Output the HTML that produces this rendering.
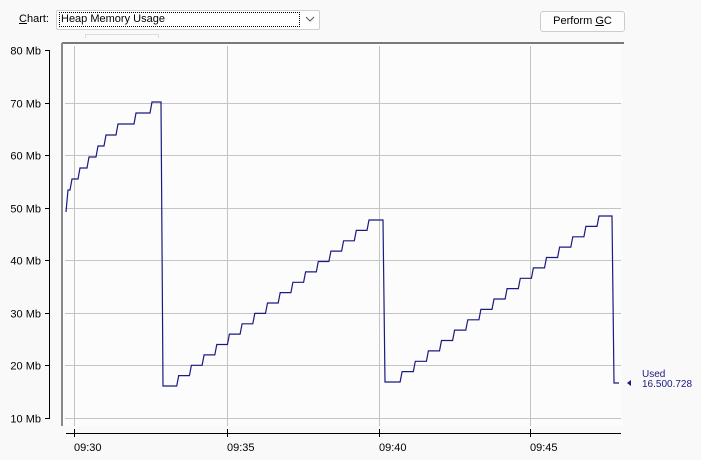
<!DOCTYPE html>
<html><head><meta charset="utf-8"><style>
body{margin:0;width:701px;height:460px;background:#f9f9f9;font-family:"Liberation Sans",sans-serif;font-size:11px;color:#000;position:relative;overflow:hidden}
.a{position:absolute}
</style></head><body>
<div class="a" style="left:19px;top:13px;font-size:11px"><u>C</u>hart:</div>
<div class="a" style="left:56px;top:10px;width:262px;height:18px;border:1px solid #cfcfcf;background:#fff;border-radius:2px"></div>
<div class="a" style="left:59px;top:12px;width:238px;height:13px;border:1px dotted #000;font-size:11px;line-height:13px;padding-left:1px">Heap Memory Usage</div>
<svg class="a" style="left:305px;top:16px" width="10" height="6"><path d="M1 1 L5 5 L9 1" fill="none" stroke="#555"/></svg>
<div class="a" style="left:85px;top:34px;width:72px;height:3px;border:1px solid #ddd;border-bottom:none"></div>
<div class="a" style="left:540px;top:11px;width:83px;height:19px;border:1px solid #ccc;border-radius:3px;background:#fdfdfd;text-align:center;line-height:19px;font-size:11px">Perform <u>G</u>C</div>
<svg class="a" style="left:0;top:0" width="701" height="460" id="s">
<rect x="62" y="43" width="560" height="383" fill="#fcfcfc"/>
<g stroke="#c4c4c4" stroke-width="1" id="grid"></g>
<line x1="62" y1="43" x2="624" y2="43" stroke="#7a7a7a" stroke-width="2"/>
<line x1="62" y1="43" x2="62" y2="426" stroke="#8a8a8a" stroke-width="2"/>
<line x1="49.5" y1="50" x2="49.5" y2="418" stroke="#000"/>
<line x1="66" y1="433.5" x2="621" y2="433.5" stroke="#000"/>
<g id="ax" font-family="Liberation Sans, sans-serif" font-size="11"></g>
<path id="d" fill="none" stroke="#1a1a80" stroke-width="1.2"/>
<path d="M631 380 L627 383 L631 386 Z" fill="#1a1a80"/>
<text x="642" y="377" font-size="10" fill="#1a1a80" font-family="Liberation Sans, sans-serif">Used</text>
<text x="642" y="387" font-size="10" fill="#1a1a80" font-family="Liberation Sans, sans-serif">16.500.728</text>
</svg>
<script>
var ns="http://www.w3.org/2000/svg",g=document.getElementById('grid'),ax=document.getElementById('ax');
function el(p,t,a,txt){var e=document.createElementNS(ns,t);for(var k in a)e.setAttribute(k,a[k]);if(txt)e.textContent=txt;p.appendChild(e);}
for(var i=0;i<=7;i++){var y=Math.round(50+i*52.57)+.5;
 if(i>0)el(g,'line',{x1:65,x2:621,y1:y,y2:y});
 el(ax,'line',{x1:45,x2:50,y1:y,y2:y,stroke:'#000'});
 el(ax,'text',{x:41,y:y+4,'text-anchor':'end'},(80-i*10)+' Mb');}
var xs=[74,227,379,530],lb=['09:30','09:35','09:40','09:45'];
xs.forEach(function(x,i){el(g,'line',{x1:x+.5,x2:x+.5,y1:46,y2:426});
 el(ax,'line',{x1:x+.5,x2:x+.5,y1:429,y2:437,stroke:'#000'});
 el(ax,'text',{x:x,y:451},lb[i]);});
var d="M66 212 L68 190 L70 190 L72 179 L78 179 L80 168 L87 168 L89 157 L96 157 L98 146 L104 146 L106 135 L116 135 L118 124 L134 124 L136 113 L150 113 L152 102 L161 102 L163 386";
function cyc(x0,y0,x1,y1,n){var dx=(x1-x0)/n,dy=(y0-y1)/n,s="";
 for(var k=0;k<n;k++){var xa=x0+dx*k+dx-2;s+=" L"+xa.toFixed(1)+" "+(y0-dy*k).toFixed(1)+" L"+(xa+2).toFixed(1)+" "+(y0-dy*(k+1)).toFixed(1);}
 return s;}
d+=" L168 386"+cyc(166,386,369,220,16).replace(/^/,"")+" L383 220 L385 382";
d+=" L391 382"+cyc(389,382,599,216,16)+" L612 216 L614 383 L619 383";
document.getElementById('d').setAttribute('d',d);
</script>
</body></html>
